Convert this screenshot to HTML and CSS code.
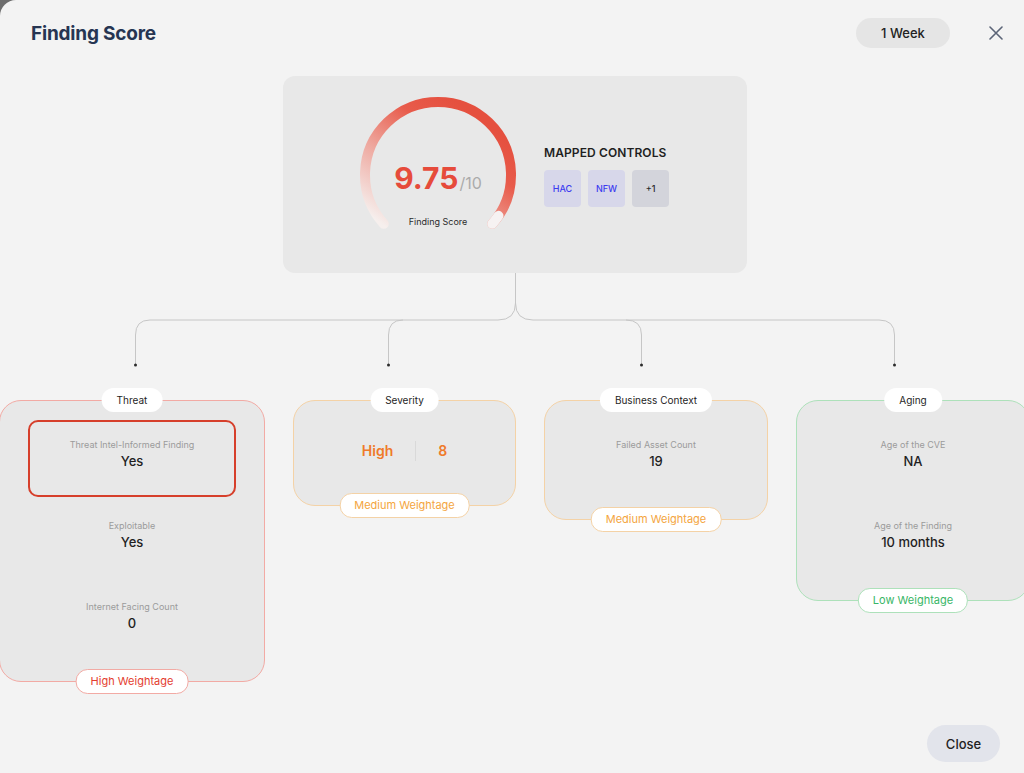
FILE: index.html
```html
<!DOCTYPE html>
<html lang="en">
<head>
  <meta charset="UTF-8">
  <meta name="viewport" content="width=device-width, initial-scale=1.0">
  <title>Finding Score</title>
  <link rel="stylesheet" href="styles.css">
</head>
<body>
  <div class="modal">
    <div class="header">
      <div class="title">Finding Score</div>
      <button class="week-btn">1 Week</button>
      <svg class="close-x" width="14" height="14" viewBox="0 0 14 14">
        <path d="M1 1 L13 13 M13 1 L1 13" stroke="#5b6477" stroke-width="1.6" stroke-linecap="round" fill="none"/>
      </svg>
    </div>

    <div class="score-card">
      <div class="gauge">
        <svg width="160" height="160" viewBox="0 0 160 160">
          <defs>
            <linearGradient id="arcGrad" gradientUnits="userSpaceOnUse" x1="25" y1="130" x2="110" y2="15">
              <stop offset="0" stop-color="#f6efed"/>
              <stop offset="0.4" stop-color="#eea79e"/>
              <stop offset="0.75" stop-color="#e85b4b"/>
              <stop offset="1" stop-color="#e5503f"/>
            </linearGradient>
          </defs>
          <path d="M25.8 128.8 A73 73 0 1 1 134.2 128.8" stroke="url(#arcGrad)" stroke-width="10" stroke-linecap="round" fill="none"/>
          <path d="M140.5 120.8 A73 73 0 0 1 134.2 128.8" stroke="#f6f2f2" stroke-width="10" stroke-linecap="round" fill="none"/>
        </svg>
        <div class="gauge-text">
          <span class="score">9.75</span><span class="score-max">/10</span>
        </div>
        <div class="gauge-label">Finding Score</div>
      </div>
      <div class="controls">
        <div class="controls-title">MAPPED CONTROLS</div>
        <div class="chips">
          <div class="chip">HAC</div>
          <div class="chip">NFW</div>
          <div class="chip chip-more">+1</div>
        </div>
      </div>
    </div>

    <svg class="connectors" width="1024" height="95" viewBox="0 0 1024 95">
      <g stroke="#c6c6c6" stroke-width="1" fill="none">
        <path d="M515.5 0 V30 Q515.5 47 498 47 H150 Q135.5 47 135.5 62 V92"/>
        <path d="M403 47 Q388.5 47 388.5 62 V92"/>
        <path d="M515.5 30 Q515.5 47 533 47 H879 Q894.5 47 894.5 62 V92"/>
        <path d="M626 47 Q641.5 47 641.5 62 V92"/>
      </g>
      <g fill="#2b2b2b">
        <circle cx="135.5" cy="92" r="1.5"/>
        <circle cx="388.5" cy="92" r="1.5"/>
        <circle cx="641.5" cy="92" r="1.5"/>
        <circle cx="894.5" cy="92" r="1.5"/>
      </g>
    </svg>

    <div class="cards">
      <div class="card card-threat">
        <div class="card-title">Threat</div>
        <div class="item item-flag">
          <div class="label">Threat Intel-Informed Finding</div>
          <div class="value">Yes</div>
        </div>
        <div class="item">
          <div class="label">Exploitable</div>
          <div class="value">Yes</div>
        </div>
        <div class="item">
          <div class="label">Internet Facing Count</div>
          <div class="value">0</div>
        </div>
        <div class="weight weight-high">High Weightage</div>
      </div>

      <div class="card card-severity">
        <div class="card-title">Severity</div>
        <div class="sev-row">
          <div class="sev-cell">High</div>
          <div class="sev-cell sev-num">8</div>
        </div>
        <div class="weight weight-medium">Medium Weightage</div>
      </div>

      <div class="card card-business">
        <div class="card-title">Business Context</div>
        <div class="item">
          <div class="label">Failed Asset Count</div>
          <div class="value">19</div>
        </div>
        <div class="weight weight-medium">Medium Weightage</div>
      </div>

      <div class="card card-aging">
        <div class="card-title">Aging</div>
        <div class="item">
          <div class="label">Age of the CVE</div>
          <div class="value">NA</div>
        </div>
        <div class="item">
          <div class="label">Age of the Finding</div>
          <div class="value">10 months</div>
        </div>
        <div class="weight weight-low">Low Weightage</div>
      </div>
    </div>

    <div class="footer">
      <button class="close-btn">Close</button>
    </div>
  </div>
</body>
</html>
```

FILE: styles.css
```css
body {
  margin: 0;
  height: 100vh;
  background: #6d6d6d;
  font-family: 'Inter', 'Noto Sans', sans-serif;
  overflow: hidden;
}

.modal {
  height: 773px;
  background: #f3f3f3;
  border-top-left-radius: 16px;
  overflow: hidden;
  display: flex;
  flex-direction: column;
}

.header {
  display: flex;
  align-items: center;
  height: 30px;
  padding: 18px 21px 0 31px;
}

.title {
  flex: 1;
  font-size: 19px;
  font-weight: 700;
  color: #263552;
  letter-spacing: -0.2px;
}

.week-btn {
  width: 94px;
  height: 30px;
  border: none;
  border-radius: 15px;
  background: #e5e5e5;
  font-family: inherit;
  font-size: 13px;
  font-weight: 500;
  color: #222;
}

.close-x {
  margin-left: 39px;
}

.score-card {
  width: 464px;
  height: 197px;
  margin: 28px 0 0 283px;
  box-sizing: border-box;
  padding: 0 0 0 75px;
  background: #e8e8e8;
  border-radius: 12px;
  display: flex;
  align-items: center;
  gap: 26px;
}

.gauge {
  position: relative;
  width: 160px;
  height: 160px;
}

.gauge svg {
  display: block;
}

.gauge-text {
  position: absolute;
  top: 65px;
  left: 0;
  right: 0;
  text-align: center;
  line-height: 36px;
}

.score {
  font-size: 30px;
  font-weight: 700;
  color: #e64b3b;
}

.score-max {
  font-size: 16px;
  color: #ababab;
  margin-left: 1px;
}

.gauge-label {
  position: absolute;
  top: 121px;
  left: 0;
  right: 0;
  text-align: center;
  font-size: 9px;
  color: #2b2b2b;
}

.controls {
  margin-top: 3px;
}

.controls-title {
  font-size: 12px;
  font-weight: 600;
  color: #1f1f1f;
  line-height: 16px;
  letter-spacing: 0.1px;
}

.chips {
  display: flex;
  gap: 7px;
  margin-top: 9px;
}

.chip {
  width: 37px;
  height: 37px;
  border-radius: 4px;
  background: #d7d7ea;
  color: #3d3cf0;
  font-size: 9px;
  font-weight: 500;
  display: flex;
  align-items: center;
  justify-content: center;
}

.chip-more {
  background: #d3d4db;
  color: #2b2b2b;
}

.connectors {
  display: block;
}

.cards {
  display: flex;
  align-items: flex-start;
  gap: 28px;
  margin: 32px 0 0 -1px;
}

.card {
  position: relative;
  flex: none;
  box-sizing: border-box;
  padding: 19px 0 18px;
  background: #e8e8e8;
  border: 1px solid;
  border-radius: 22px;
}

.card-threat { width: 266px; border-color: #f2aaa4; }
.card-severity { width: 223px; border-color: #f4d2a6; }
.card-business { width: 224px; border-color: #f4d2a6; }
.card-aging { width: 234px; border-color: #ade1ba; }

.card-title {
  position: absolute;
  top: -13px;
  left: 50%;
  transform: translateX(-50%);
  height: 24px;
  line-height: 24px;
  padding: 0 15px;
  background: #fff;
  border-radius: 12px;
  font-size: 10px;
  color: #1f1f1f;
  white-space: nowrap;
}

.item {
  height: 77px;
  box-sizing: border-box;
  margin: 0 28px 4px;
  padding-top: 17px;
  border: 2px solid transparent;
  border-radius: 10px;
  text-align: center;
}

.item:last-of-type {
  margin-bottom: 0;
}

.item-flag {
  border: 2.5px solid #d63f2b;
  padding-top: 16.5px;
}

.label {
  font-size: 9px;
  line-height: 12px;
  color: #9b9b9b;
}

.value {
  margin-top: 1px;
  font-size: 13px;
  line-height: 18px;
  font-weight: 500;
  color: #1f1f1f;
}

.sev-row {
  height: 67px;
  box-sizing: border-box;
  padding-bottom: 6px;
  display: flex;
  align-items: center;
  justify-content: center;
}

.sev-cell {
  padding: 0 22px;
  font-size: 14px;
  font-weight: 600;
  color: #ef7a2a;
  line-height: 20px;
}

.sev-num {
  border-left: 1px solid #d9d9d9;
}

.weight {
  position: absolute;
  bottom: -13px;
  left: 50%;
  transform: translateX(-50%);
  height: 23px;
  line-height: 23px;
  padding: 0 14px;
  background: #fff;
  border: 1px solid;
  border-radius: 12px;
  font-size: 11px;
  white-space: nowrap;
}

.weight-high { color: #e43d2e; border-color: #f2aaa4; }
.weight-medium { color: #f4a53e; border-color: #f4d2a6; }
.weight-low { color: #38b666; border-color: #ade1ba; }

.footer {
  margin-top: auto;
  display: flex;
  justify-content: flex-end;
  padding: 0 24px 11px;
}

.close-btn {
  width: 73px;
  height: 37px;
  border: none;
  border-radius: 19px;
  background: #e2e4eb;
  font-family: inherit;
  font-size: 13px;
  font-weight: 500;
  color: #222;
}
```
